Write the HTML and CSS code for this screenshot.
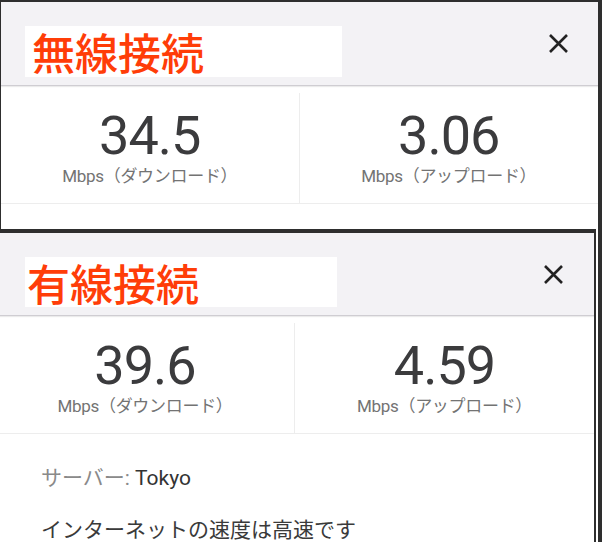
FILE: index.html
```html
<!DOCTYPE html>
<html lang="ja">
<head>
    <meta charset="UTF-8">
    <meta name="viewport" content="width=device-width, initial-scale=1.0">
    <title>Speed Test</title>
    <link rel="stylesheet" href="styles.css">
</head>
<body>
    <div class="page">
        <section class="shot shot-wifi">
            <header class="shot-head">
                <h2 class="shot-title">無線接続</h2>
                <button class="close" type="button" aria-label="閉じる">
                    <svg width="21" height="21" viewBox="0 0 21 21"><path d="M2 2L19 19M19 2L2 19"/></svg>
                </button>
            </header>
            <div class="stats">
                <div class="stat">
                    <div class="stat-value">34.5</div>
                    <div class="stat-unit">Mbps（ダウンロード）</div>
                </div>
                <div class="stat">
                    <div class="stat-value">3.06</div>
                    <div class="stat-unit">Mbps（アップロード）</div>
                </div>
            </div>
        </section>
        <section class="shot shot-wired">
            <header class="shot-head">
                <h2 class="shot-title">有線接続</h2>
                <button class="close" type="button" aria-label="閉じる">
                    <svg width="21" height="21" viewBox="0 0 21 21"><path d="M2 2L19 19M19 2L2 19"/></svg>
                </button>
            </header>
            <div class="stats">
                <div class="stat">
                    <div class="stat-value">39.6</div>
                    <div class="stat-unit">Mbps（ダウンロード）</div>
                </div>
                <div class="stat">
                    <div class="stat-value">4.59</div>
                    <div class="stat-unit">Mbps（アップロード）</div>
                </div>
            </div>
            <div class="details">
                <p class="server"><span class="muted">サーバー: </span>Tokyo</p>
                <p class="verdict">インターネットの速度は高速です</p>
            </div>
        </section>
    </div>
</body>
</html>
```

FILE: styles.css
```css
body {
    margin: 0;
    background-color: #fff;
    font-family: Roboto, "Noto Sans CJK JP", sans-serif;
    color: #333;
}
.page {
    width: 602px;
    height: 542px;
    overflow: hidden;
    box-sizing: border-box;
    border-right: 4px solid #2e2e2e;
}
.shot {
    background-color: #fff;
}
.shot-wifi {
    height: 227px;
    border-top: 2px solid #2e2e2e;
    border-left: 1px solid #2e2e2e;
}
.shot-wired {
    width: 600px;
    box-sizing: border-box;
    margin-left: -4px;
    border-top: 4px solid #2e2e2e;
    border-right: 2px solid #2e2e2e;
}
.shot-head {
    display: flex;
    justify-content: space-between;
    align-items: flex-start;
    height: 84px;
    box-sizing: border-box;
    padding: 24px 29px 0 24px;
    background-color: #f3f2f5;
    border-bottom: 1px solid #cfcdd2;
    box-shadow: 0 1px 1px rgba(0, 0, 0, 0.08);
}
.shot-wired .shot-head {
    height: 83px;
    padding: 24px 30px 0 29px;
}
.shot-title {
    width: 317px;
    height: 51px;
    margin: 0;
    box-sizing: border-box;
    padding-left: 7px;
    background-color: #fff;
    color: #ff3d08;
    font-family: "Noto Sans CJK JP", sans-serif;
    font-size: 43px;
    font-weight: 500;
    line-height: 51px;
}
.shot-wired .shot-title {
    width: 312px;
    height: 50px;
    padding-left: 2px;
}
.close {
    margin-top: 7px;
    padding: 0;
    border: none;
    background: none;
    width: 21px;
    height: 21px;
}
.close svg {
    display: block;
    stroke: #222;
    stroke-width: 2.6;
    fill: none;
}
.stats {
    display: grid;
    grid-template-columns: 1fr 1fr;
    height: 110px;
    margin-top: 7px;
    border-bottom: 1px solid #ededed;
}
.stat {
    padding-top: 14px;
    text-align: center;
}
.stat:first-child {
    border-right: 1px solid #ededed;
}
.stat-value {
    font-size: 54px;
    line-height: 58px;
    letter-spacing: -1px;
    color: #3b3b3d;
}
.stat-unit {
    font-size: 17px;
    line-height: 22px;
    letter-spacing: -0.3px;
    color: #737373;
}
.details {
    padding: 30px 0 0 45px;
}
.details p {
    margin: 0;
    font-size: 21px;
    line-height: 28px;
}
.server {
    color: #333;
}
.muted {
    color: #8a8a8a;
}
.verdict {
    margin-top: 24px !important;
    color: #3a3a3a;
}
```
